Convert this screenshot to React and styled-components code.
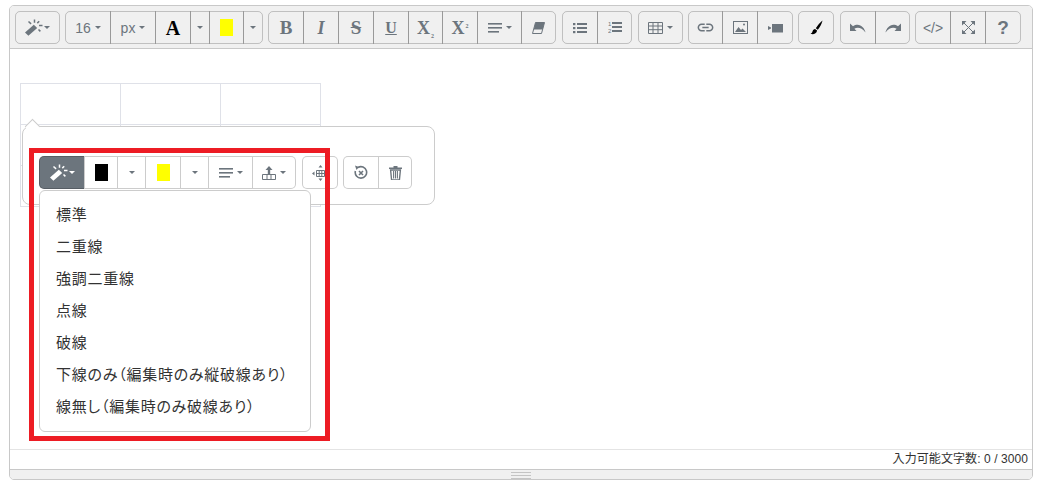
import React from 'react';
import styled, { createGlobalStyle } from 'styled-components';
import { MdLink } from 'react-icons/md';

const GRAY = '#6c757d';
const SANS = '"Liberation Sans", Arial, "Noto Sans CJK JP", sans-serif';
const SERIF = '"Liberation Serif", "Times New Roman", serif';

const Global = createGlobalStyle`
  html, body { margin: 0; padding: 0; background: #fff; }
  body { font-family: ${SANS}; color: #333; }
`;

const Page = styled.div`
  padding: 5px 5px 0 9px;
  width: 1038px;
  height: 483px;
  box-sizing: border-box;
  overflow: hidden;
`;

const Editor = styled.div`
  width: 1024px;
  height: 475px;
  box-sizing: border-box;
  border: 1px solid #c8c8c8;
  border-radius: 5px;
  display: flex;
  flex-direction: column;
  overflow: hidden;
`;

const Toolbar = styled.div`
  height: 43px;
  flex: none;
  box-sizing: border-box;
  padding: 5px;
  background: #f0f0f0;
  border-bottom: 1px solid #c8c8c8;
  display: flex;
  align-items: flex-start;
`;

const Group = styled.div`
  display: flex;
  margin-left: ${({ $gap }) => $gap ?? 5}px;
  &:first-child { margin-left: 0; }
`;

const Btn = styled.div`
  width: ${({ $w }) => $w}px;
  height: 33px;
  box-sizing: border-box;
  flex: none;
  display: flex;
  align-items: center;
  justify-content: center;
  gap: 4px;
  margin-left: -1px;
  border: 1px solid rgba(0, 0, 0, 0.2);
  color: ${({ $active }) => ($active ? '#fff' : GRAY)};
  background: ${({ $active, $white }) => ($active ? GRAY : $white ? '#fff' : 'transparent')};
  font-size: 14px;
  &:first-child { margin-left: 0; border-radius: 5px 0 0 5px; }
  &:last-child { border-radius: 0 5px 5px 0; }
  &:only-child { border-radius: 5px; }
`;

const Caret = styled.span`
  width: 0;
  height: 0;
  border-left: 3px solid transparent;
  border-right: 3px solid transparent;
  border-top: 3px solid currentColor;
`;

const Swatch = styled.span`
  width: 13px;
  height: 17px;
  background: ${({ $color }) => $color};
`;

const Glyph = styled.span`
  font-family: ${({ $sans }) => ($sans ? SANS : SERIF)};
  font-weight: ${({ $thin }) => ($thin ? 400 : 700)};
  font-style: ${({ $italic }) => ($italic ? 'italic' : 'normal')};
  font-size: ${({ $size }) => $size || 18}px;
  color: ${({ $color }) => $color || GRAY};
  text-decoration: ${({ $line }) => $line || 'none'};
  line-height: 1;
`;

const Small = styled.span`
  font-size: 6px;
  position: relative;
  top: ${({ $up }) => ($up ? -6 : 4)}px;
  margin-left: 1px;
`;

const Content = styled.div`
  flex: 1;
  position: relative;
  padding: 34px 10px 0;
`;

const Table = styled.table`
  border-collapse: collapse;
  table-layout: fixed;
  td {
    width: 99px;
    height: 40px;
    padding: 0;
    border: 1px solid #dfe1e8;
  }
`;

const Popover = styled.div`
  position: absolute;
  left: 12px;
  top: 77px;
  width: 413px;
  height: 79px;
  box-sizing: border-box;
  background: #fff;
  border: 1px solid #ccc;
  border-radius: 8px;
  padding: 29px 0 0 16px;
  display: flex;
  align-items: flex-start;
  &::before {
    content: '';
    position: absolute;
    left: 4px;
    top: -6px;
    width: 10px;
    height: 10px;
    background: #fff;
    border-left: 1px solid #ccc;
    border-top: 1px solid #ccc;
    transform: rotate(45deg);
  }
`;

const Menu = styled.div`
  position: absolute;
  left: 16px;
  top: 63px;
  width: 272px;
  box-sizing: border-box;
  padding: 8px 0;
  background: #fff;
  border: 1px solid #ccc;
  border-radius: 6px;
`;

const MenuItem = styled.div`
  height: 32px;
  line-height: 30px;
  padding-left: 16px;
  font-family: "Noto Sans CJK JP", sans-serif;
  font-size: 15px;
  font-feature-settings: "palt";
  letter-spacing: 0.75px;
  color: #333;
  white-space: nowrap;
`;

const Highlight = styled.div`
  position: absolute;
  left: 6px;
  top: 21px;
  width: 301px;
  height: 293px;
  box-sizing: border-box;
  border: 5px solid #ed1c24;
  pointer-events: none;
`;

const Status = styled.div`
  flex: none;
  height: 20px;
  box-sizing: border-box;
  border-top: 1px solid #e4e4e4;
  padding-right: 4px;
  text-align: right;
  font-size: 12px;
  letter-spacing: 0.08px;
  line-height: 19px;
  color: #333;
`;

const Resize = styled.div`
  flex: none;
  height: 10px;
  box-sizing: border-box;
  background: #f0f0f0;
  border-top: 1px solid #c8c8c8;
  display: flex;
  justify-content: center;
  padding-top: 2px;
`;

const Handle = styled.div`
  width: 20px;
  height: 5px;
  border-top: 1px solid #c4c4c4;
  border-bottom: 1px solid #c4c4c4;
  position: relative;
  &::after {
    content: '';
    position: absolute;
    left: 0;
    right: 0;
    top: 2px;
    height: 1px;
    background: #c4c4c4;
  }
`;

const WandSvg = styled.svg`
  margin-right: -3px;
`;

const Svg = ({ w = 16, h = 14, children }) => (
  <svg width={w} height={h} viewBox={`0 0 ${w} ${h}`} fill="currentColor">{children}</svg>
);

const WandIcon = () => (
  <WandSvg width="18" height="17" viewBox="0 0 18 17" fill="currentColor">
    <path d="M0 13.5L8.8 5.8L12.2 9L3.4 16.8Z" />
    <path d="M9.5 0.5v3.2M14 6.5h3.5M3.5 2.5l2.6 2.4M14.2 2.2l-1.9 1.9M13.5 10.5l1.9 1.9" stroke="currentColor" strokeWidth="1.5" fill="none" />
  </WandSvg>
);

const AlignIcon = () => (
  <Svg w={14} h={12}>
    <rect y="1" width="14" height="1.6" />
    <rect y="5" width="14" height="1.6" />
    <rect y="9" width="11" height="1.6" />
  </Svg>
);

const EraserIcon = () => (
  <Svg w={13} h={12}>
    <path d="M3.5 0.5H12.5L9.5 11.5H0.5Z" fill="none" stroke="currentColor" strokeWidth="1" />
    <path d="M3.5 0.5H12.5L10.7 7.5H1.7Z" />
  </Svg>
);

const BulletIcon = () => (
  <Svg w={14} h={12}>
    <rect y="1" width="2.4" height="2.2" />
    <rect y="5" width="2.4" height="2.2" />
    <rect y="9" width="2.4" height="2.2" />
    <rect x="4" y="1" width="10" height="2" />
    <rect x="4" y="5" width="10" height="2" />
    <rect x="4" y="9" width="10" height="2" />
  </Svg>
);

const NumberIcon = () => (
  <Svg w={14} h={13}>
    <text x="0" y="5" fontSize="6" fontFamily={SANS}>1</text>
    <text x="0" y="12" fontSize="6" fontFamily={SANS}>2</text>
    <rect x="4" y="1" width="10" height="2" />
    <rect x="4" y="5" width="10" height="2" />
    <rect x="4" y="9" width="10" height="2" />
  </Svg>
);

const TableIcon = () => (
  <Svg w={15} h={12}>
    <path d="M.5.5h14v11H.5zM.5 4h14M.5 7.7h14M5 .5v11M10 .5v11" fill="none" stroke="currentColor" strokeWidth="1" />
  </Svg>
);

const ImageIcon = () => (
  <Svg w={15} h={13}>
    <rect x=".5" y=".5" width="14" height="12" fill="none" stroke="currentColor" />
    <path d="M2 11l3.5-5 2.5 3 1.5-1.5L13 11Z" />
    <circle cx="11" cy="3.5" r="1" />
  </Svg>
);

const VideoIcon = () => (
  <Svg w={15} h={10}>
    <rect x="4" y="1" width="11" height="8.5" />
    <path d="M0 3l3 1.5v1L0 7Z" />
  </Svg>
);

const BrushIcon = () => (
  <Svg w={13} h={15}>
    <path d="M12.5 0.5C10 2.5 7.5 5.5 5.8 8.2L7.8 9.8C9.8 7.2 11.8 4 12.5 0.5Z" fill="#000" />
    <path d="M5 9C3 9.3 2.6 11 2.3 12C2 13 1.2 13.4 0.5 13.7C2.5 14.8 6.5 14.2 7.1 10.6Z" fill="#000" />
  </Svg>
);

const UndoIcon = ({ flip }) => (
  <svg width="16" height="10" viewBox="0 0 16 10" fill="currentColor" style={flip ? { transform: 'scaleX(-1)' } : undefined}>
    <path d="M0 0.5v7.5h6.5L4.4 5.8C7 3.8 11.5 4 15.5 9.5 14.5 4 9 -1 3 3.2Z" />
  </svg>
);

const ExpandIcon = () => (
  <Svg w={13} h={13}>
    <path d="M0 0h4.5L0 4.5ZM13 0H8.5L13 4.5ZM0 13h4.5L0 8.5ZM13 13H8.5L13 8.5Z" />
    <path d="M2 2l9 9M11 2l-9 9" stroke="currentColor" strokeWidth="1" fill="none" />
  </Svg>
);

const FloatIcon = () => (
  <Svg w={14} h={14}>
    <path d="M7 0l3.5 4H8.2v4H5.8V4H3.5Z" />
    <path d="M.5 8.5h13v5H.5zM5 8.5v5M9 8.5v5" fill="none" stroke="currentColor" />
  </Svg>
);

const ResizeIcon = () => (
  <Svg w={16} h={16}>
    <path d="M4.5 5.5h8v6h-8zM4.5 8.5h8M7.2 5.5v6M9.8 5.5v6" fill="none" stroke="currentColor" />
    <path d="M8.5 0l2 2.5h-4ZM8.5 16l2-2.5h-4ZM0 8.5l2.5-2v4Z" />
  </Svg>
);

const RotateXIcon = () => (
  <svg width="14" height="15" viewBox="0 0 14 15" fill="none" stroke="currentColor">
    <path d="M4 2.5a5.7 5.7 0 1 1-2.6 3.5" strokeWidth="1.6" />
    <path d="M1 .5l4 1.5-2.5 3Z" fill="currentColor" stroke="none" />
    <path d="M5 6l4 4M9 6l-4 4" strokeWidth="1.6" />
  </svg>
);

const TrashIcon = () => (
  <Svg w={13} h={14}>
    <path d="M0 1.5h13v1.4H0zM4.5 0h4v1.5h-4z" />
    <path d="M1.6 4h9.8l-1 10H2.6Z" fill="none" stroke="currentColor" strokeWidth="1.4" />
    <path d="M4.6 5v7.5M6.5 5v7.5M8.4 5v7.5" stroke="currentColor" strokeWidth="1.1" />
  </Svg>
);

const styleNames = [
  '標準',
  '二重線',
  '強調二重線',
  '点線',
  '破線',
  '下線のみ（編集時のみ縦破線あり）',
  '線無し（編集時のみ破線あり）',
];

export default function App() {
  return (
    <Page>
      <Global />
      <Editor>
        <Toolbar>
          <Group>
            <Btn $w={45}><WandIcon /><Caret /></Btn>
          </Group>
          <Group>
            <Btn $w={46}>16<Caret /></Btn>
            <Btn $w={46}>px<Caret /></Btn>
            <Btn $w={36}><Glyph $size={20} $color="#000">A</Glyph></Btn>
            <Btn $w={20}><Caret /></Btn>
            <Btn $w={35}><Swatch $color="#ffff00" /></Btn>
            <Btn $w={20}><Caret /></Btn>
          </Group>
          <Group>
            <Btn $w={36}><Glyph $size={19}>B</Glyph></Btn>
            <Btn $w={36}><Glyph $italic>I</Glyph></Btn>
            <Btn $w={36}><Glyph $size={19} $line="line-through">S</Glyph></Btn>
            <Btn $w={36}><Glyph $size={16} $line="underline">U</Glyph></Btn>
            <Btn $w={35}><Glyph>X<Small>2</Small></Glyph></Btn>
            <Btn $w={36}><Glyph>X<Small $up>2</Small></Glyph></Btn>
            <Btn $w={45}><AlignIcon /><Caret /></Btn>
            <Btn $w={35}><EraserIcon /></Btn>
          </Group>
          <Group $gap={6}>
            <Btn $w={36}><BulletIcon /></Btn>
            <Btn $w={35}><NumberIcon /></Btn>
          </Group>
          <Group $gap={6}>
            <Btn $w={45}><TableIcon /><Caret /></Btn>
          </Group>
          <Group>
            <Btn $w={35}><MdLink size={19} /></Btn>
            <Btn $w={36}><ImageIcon /></Btn>
            <Btn $w={36}><VideoIcon /></Btn>
          </Group>
          <Group>
            <Btn $w={36}><BrushIcon /></Btn>
          </Group>
          <Group $gap={6}>
            <Btn $w={36}><UndoIcon /></Btn>
            <Btn $w={35}><UndoIcon flip /></Btn>
          </Group>
          <Group>
            <Btn $w={36}><Glyph $sans $thin $size={14}>&lt;/&gt;</Glyph></Btn>
            <Btn $w={36}><ExpandIcon /></Btn>
            <Btn $w={36}><Glyph $sans $size={19}>?</Glyph></Btn>
          </Group>
        </Toolbar>

        <Content>
          <Table>
            <tbody>
              {[0, 1, 2].map((r) => (
                <tr key={r}><td /><td /><td /></tr>
              ))}
            </tbody>
          </Table>

          <Popover>
            <Group>
              <Btn $w={46} $active><WandIcon /><Caret /></Btn>
              <Btn $w={34} $white><Swatch $color="#000" /></Btn>
              <Btn $w={29} $white><Caret /></Btn>
              <Btn $w={36} $white><Swatch $color="#ffff00" /></Btn>
              <Btn $w={29} $white><Caret /></Btn>
              <Btn $w={45} $white><AlignIcon /><Caret /></Btn>
              <Btn $w={44} $white><FloatIcon /><Caret /></Btn>
            </Group>
            <Group $gap={6}>
              <Btn $w={36} $white><ResizeIcon /></Btn>
            </Group>
            <Group>
              <Btn $w={36} $white><RotateXIcon /></Btn>
              <Btn $w={34} $white><TrashIcon /></Btn>
            </Group>
            <Menu>
              {styleNames.map((name) => (
                <MenuItem key={name}>{name}</MenuItem>
              ))}
            </Menu>
            <Highlight />
          </Popover>
        </Content>

        <Status>入力可能文字数: 0 / 3000</Status>
        <Resize><Handle /></Resize>
      </Editor>
    </Page>
  );
}
